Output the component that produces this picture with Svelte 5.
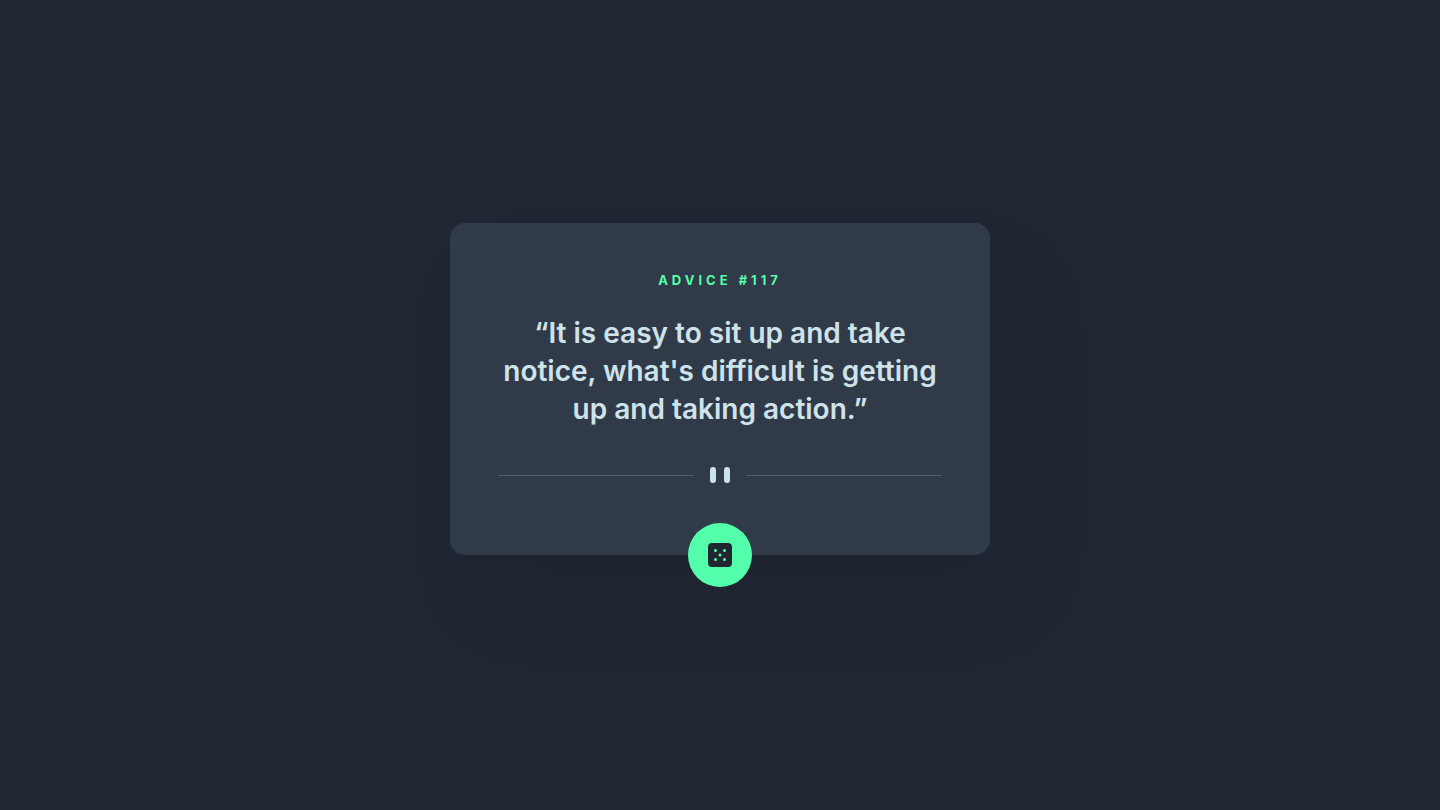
<main>
    <article class="card">
        <h1 class="label">Advice #{advice.id}</h1>
        <p class="quote">“{advice.text}”</p>
        <svg class="divider" width="444" height="16" viewBox="0 0 444 16" aria-hidden="true">
            <path fill="#4f5d74" d="M0 8h196v1H0zM248 8h196v1H248z" />
            <g fill="#cee3e9">
                <rect x="212" width="6" height="16" rx="3" />
                <rect x="226" width="6" height="16" rx="3" />
            </g>
        </svg>
        <button class="dice" aria-label="Next advice" onclick={next}>
            <svg width="24" height="24" viewBox="0 0 24 24" aria-hidden="true">
                <path fill="#202733" d="M20 0H4a4.005 4.005 0 0 0-4 4v16a4.005 4.005 0 0 0 4 4h16a4.005 4.005 0 0 0 4-4V4a4.005 4.005 0 0 0-4-4ZM7.500 18a1.500 1.500 0 1 1 0-3 1.500 1.500 0 0 1 0 3Zm0-9a1.500 1.500 0 1 1 0-3 1.500 1.500 0 0 1 0 3Zm4.500 4.500a1.500 1.500 0 1 1 0-3 1.500 1.500 0 0 1 0 3Zm4.500 4.500a1.500 1.500 0 1 1 0-3 1.500 1.500 0 0 1 0 3Zm0-9a1.500 1.500 0 1 1 0-3 1.500 1.500 0 0 1 0 3Z" />
            </svg>
        </button>
    </article>
</main>

<script lang="ts">
    interface Advice {
        id: number,
        text: string
    }
    const adviceList: Advice[] = [
        { id: 117, text: "It is easy to sit up and take notice, what's difficult is getting up and taking action." }
    ]
    let index = $state(0)
    let advice = $derived(adviceList[index])

    const next = () => {
        index = (index + 1) % adviceList.length
    }
</script>

<style>
    :global(body) {
        margin: 0;
        background-color: #202733;
    }
    main {
        min-height: 100vh;
        box-sizing: border-box;
        padding: 32px 16px;
        display: flex;
        align-items: center;
        justify-content: center;
        font-family: Inter, "Open Sans", sans-serif;
    }
    .card {
        width: 100%;
        max-width: 540px;
        box-sizing: border-box;
        padding: 48px 48px 0;
        display: flex;
        flex-direction: column;
        align-items: center;
        text-align: center;
        background-color: #313a48;
        border-radius: 15px;
        box-shadow: 30px 50px 80px rgba(0, 0, 0, 0.08);
        margin-bottom: 32px;
    }
    .label {
        margin: 0 0 25px;
        font-size: 13px;
        line-height: 18px;
        font-weight: 700;
        letter-spacing: 4px;
        text-transform: uppercase;
        color: #53ffaa;
    }
    .quote {
        margin: 0 0 39px;
        font-size: 28px;
        line-height: 38px;
        font-weight: 600;
        color: #cee3e9;
    }
    .divider {
        max-width: 100%;
    }
    .dice {
        width: 64px;
        height: 64px;
        margin: 40px 0 -32px;
        padding: 0;
        display: flex;
        align-items: center;
        justify-content: center;
        border: 0;
        border-radius: 50%;
        background-color: #53ffaa;
        cursor: pointer;
    }
    .dice:hover {
        box-shadow: 0 0 40px #53ffaa;
    }
</style>
